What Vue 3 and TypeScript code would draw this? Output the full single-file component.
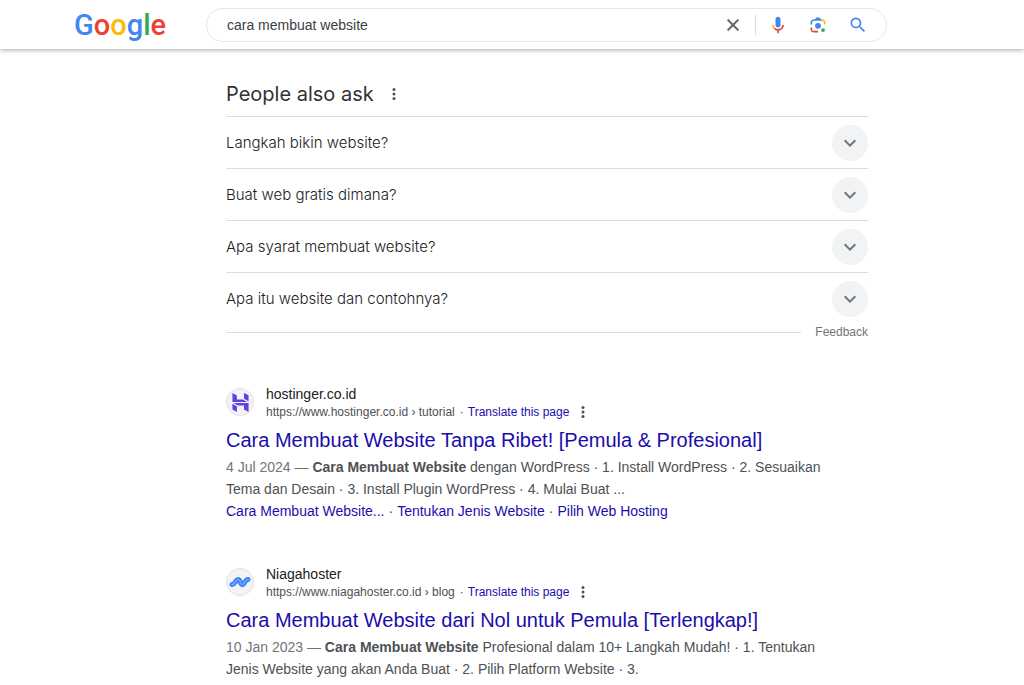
<script setup lang="ts">
import { ref } from 'vue'

interface SearchResult {
  id: string
  site: string
  url: string
  crumb: string
  title: string
  date: string
  summary: string
  links: string[]
}

const query = ref('cara membuat website')
const opened = ref<number | null>(null)

const logo = [
  { char: 'G', tone: 'blue' },
  { char: 'o', tone: 'red' },
  { char: 'o', tone: 'yellow' },
  { char: 'g', tone: 'blue' },
  { char: 'l', tone: 'green' },
  { char: 'e', tone: 'red' },
]

const questions = [
  'Langkah bikin website?',
  'Buat web gratis dimana?',
  'Apa syarat membuat website?',
  'Apa itu website dan contohnya?',
]

const results: SearchResult[] = [
  {
    id: 'hostinger',
    site: 'hostinger.co.id',
    url: 'https://www.hostinger.co.id',
    crumb: 'tutorial',
    title: 'Cara Membuat Website Tanpa Ribet! [Pemula & Profesional]',
    date: '4 Jul 2024',
    summary: 'dengan WordPress · 1. Install WordPress · 2. Sesuaikan Tema dan Desain · 3. Install Plugin WordPress · 4. Mulai Buat ...',
    links: ['Cara Membuat Website...', 'Tentukan Jenis Website', 'Pilih Web Hosting'],
  },
  {
    id: 'niagahoster',
    site: 'Niagahoster',
    url: 'https://www.niagahoster.co.id',
    crumb: 'blog',
    title: 'Cara Membuat Website dari Nol untuk Pemula [Terlengkap!]',
    date: '10 Jan 2023',
    summary: 'Profesional dalam 10+ Langkah Mudah! · 1. Tentukan Jenis Website yang akan Anda Buat · 2. Pilih Platform Website · 3.',
    links: [],
  },
]

function toggle(index: number) {
  opened.value = opened.value === index ? null : index
}
</script>

<template>
  <div class="page">
    <header class="topbar">
      <a class="logo" href="#" aria-label="Google">
        <span v-for="(part, i) in logo" :key="i" :class="part.tone">{{ part.char }}</span>
      </a>
      <form class="search" role="search" @submit.prevent>
        <input v-model="query" class="query" type="text" aria-label="Search" />
        <button class="tool clear" type="button" aria-label="Clear" @click="query = ''">
          <svg width="20" height="20" viewBox="0 0 24 24"><path fill="#5f6368" stroke="#5f6368" stroke-width="0.6" d="M19 6.410L17.590 5 12 10.590 6.410 5 5 6.410 10.590 12 5 17.590 6.410 19 12 13.410 17.590 19 19 17.590 13.410 12z" /></svg>
        </button>
        <button class="tool" type="button" aria-label="Search by voice">
          <svg width="20" height="20" viewBox="0 0 24 24">
            <path fill="#4285f4" d="M12 15c1.660 0 3-1.310 3-2.970V5c0-1.660-1.340-3-3-3S9 3.340 9 5v7.030C9 13.690 10.340 15 12 15z" />
            <path fill="#34a853" d="M11 18.080h2V22h-2z" />
            <path fill="#fbbc04" d="M7.050 16.870A6.900 6.900 0 0 1 5 12h2c0 1.450.560 2.420 1.470 3.380z" />
            <path fill="#ea4335" d="M12 16.930a4.970 4.970 0 0 1-3.540-1.550l-1.410 1.490A6.950 6.950 0 0 0 12 19c3.870 0 7-3.130 7-7h-2c0 2.760-2.240 4.930-5 4.930z" />
          </svg>
        </button>
        <button class="tool" type="button" aria-label="Search by image">
          <svg width="20" height="20" viewBox="0 0 192 192">
            <circle fill="#34a853" cx="144" cy="144" r="18" />
            <circle fill="#4285f4" cx="96" cy="104" r="28" />
            <path fill="#ea4335" d="M24 135.200c0 18.110 14.690 32.800 32.800 32.800H96v-16H56.100c-8.800 0-16.100-7.300-16.100-16.100V120H24z" />
            <path fill="#fbbc04" d="M168 72.800c0-18.110-14.690-32.800-32.800-32.800H116l20 16c8.800 0 16 7.290 16 16.100V92h16z" />
            <path fill="#4285f4" d="M112 24H80L68 40H56.800C38.690 40 24 54.690 24 72.800V92h16V72c0-8.800 7.200-16 16-16h80l-12-16z" />
          </svg>
        </button>
        <button class="tool" type="submit" aria-label="Search">
          <svg width="20" height="20" viewBox="0 0 24 24"><path fill="#4285f4" d="M15.500 14h-.790l-.280-.270A6.470 6.470 0 0 0 16 9.500 6.500 6.500 0 1 0 9.500 16c1.610 0 3.090-.590 4.230-1.570l.270.280v.790l5 4.990L20.490 19zm-6 0C7.010 14 5 11.990 5 9.500S7.010 5 9.500 5 14 7.010 14 9.500 11.990 14 9.500 14z" /></svg>
        </button>
      </form>
    </header>

    <main class="content">
      <section class="ask" aria-labelledby="ask-title">
        <div class="ask-head">
          <h2 id="ask-title">People also ask</h2>
          <button class="more" type="button" aria-label="About this section">
            <svg width="4" height="12" viewBox="0 0 4 12" fill="#4d5156"><circle cx="2" cy="1.500" r="1.500" /><circle cx="2" cy="6" r="1.500" /><circle cx="2" cy="10.500" r="1.500" /></svg>
          </button>
        </div>
        <button
          v-for="(question, i) in questions"
          :key="question"
          class="question"
          type="button"
          :aria-expanded="opened === i"
          @click="toggle(i)"
        >
          <span>{{ question }}</span>
          <span class="chevron">
            <svg width="24" height="24" viewBox="0 0 24 24"><path fill="#70757a" d="M16.590 8.590L12 13.170 7.410 8.590 6 10l6 6 6-6z" /></svg>
          </span>
        </button>
        <div class="feedback"><a href="#">Feedback</a></div>
      </section>

      <article v-for="result in results" :key="result.id" class="result">
        <div class="source">
          <span class="favicon">
            <svg v-if="result.id === 'hostinger'" width="19" height="19" viewBox="0 0 24 24" fill="#673de6">
              <path d="M16.415 0v7.160l5.785 3.384V2.949zM1.800 0v11.237h18.815L14.890 8.090l-7.457-.003V3.024zM16.415 20.894v-5.019l-7.514-.005-5.820-3.197 19.119.091V24zM1.800 13.551v7.343l5.633 2.949v-6.988z" />
            </svg>
            <svg v-else width="22" height="14" viewBox="0 0 22 14" fill="none" stroke-linecap="round" stroke-linejoin="round">
              <path stroke="#3f83f8" stroke-width="5" d="M3 9.500C5 10 6 7 7.500 5.500S10 4 11 6.500s2 4 3.500 2.500S17 4 19 4.500" />
              <path stroke="#a9c8ff" stroke-width="1" d="M3 9.500C5 10 6 7 7.500 5.500S10 4 11 6.500s2 4 3.500 2.500S17 4 19 4.500" />
            </svg>
          </span>
          <div class="source-text">
            <div class="site">{{ result.site }}</div>
            <div class="address">
              <cite>{{ result.url }} › {{ result.crumb }}</cite>
              <span class="dot">·</span>
              <a href="#">Translate this page</a>
              <button class="more" type="button" aria-label="About this result">
                <svg width="4" height="12" viewBox="0 0 4 12" fill="#4d5156"><circle cx="2" cy="1.500" r="1.500" /><circle cx="2" cy="6" r="1.500" /><circle cx="2" cy="10.500" r="1.500" /></svg>
              </button>
            </div>
          </div>
        </div>
        <h3><a href="#">{{ result.title }}</a></h3>
        <p class="snippet"><span class="date">{{ result.date }} — </span><b>Cara Membuat Website</b> {{ result.summary }}</p>
        <div v-if="result.links.length" class="sitelinks">
          <template v-for="(link, i) in result.links" :key="link">
            <span v-if="i > 0">·</span>
            <a href="#">{{ link }}</a>
          </template>
        </div>
      </article>
    </main>
  </div>
</template>

<style>
body {
  margin: 0;
  background: #fff;
}
</style>

<style scoped>
.page {
  height: 100vh;
  overflow: hidden;
  font-family: "Liberation Sans", Arial, sans-serif;
  font-size: 14px;
  color: #4d5156;
}
a {
  color: #1a0dab;
  text-decoration: none;
}
button {
  padding: 0;
  border: 0;
  background: none;
  font: inherit;
  color: inherit;
  cursor: pointer;
}
svg {
  display: block;
}
.topbar {
  display: flex;
  align-items: center;
  height: 49px;
  padding-left: 74px;
  box-shadow: 0 1px 5px rgba(32, 33, 36, 0.4);
}
.logo {
  width: 132px;
  font-family: Roboto, sans-serif;
  font-size: 29px;
  font-weight: 500;
  line-height: 40px;
}
.blue { color: #4285f4; }
.red { color: #ea4335; }
.yellow { color: #fbbc05; }
.green { color: #34a853; }
.search {
  display: flex;
  align-items: center;
  box-sizing: border-box;
  flex: 0 1 681px;
  height: 34px;
  padding: 0 18px 0 20px;
  border: 1px solid #e4e8ea;
  border-radius: 17px;
}
.query {
  flex: 1;
  min-width: 0;
  padding: 0;
  border: 0;
  outline: 0;
  background: none;
  font: inherit;
  color: #3c4043;
}
.tool {
  display: flex;
  margin-left: 20px;
}
.clear {
  padding-right: 12px;
  margin-right: -8px;
  border-right: 1px solid #dadce0;
}
.content {
  width: 642px;
  max-width: calc(100% - 226px);
  margin-left: 226px;
}
.ask {
  padding-top: 26px;
  margin-bottom: 44px;
}
.ask-head {
  display: flex;
  align-items: center;
  gap: 18px;
  height: 38px;
  padding-bottom: 3px;
}
h2 {
  margin: 0;
  font-family: Inter, sans-serif;
  font-size: 20px;
  font-weight: 400;
  line-height: 28px;
  color: #303134;
}
.question {
  display: flex;
  align-items: center;
  justify-content: space-between;
  width: 100%;
  height: 52px;
  border-top: 1px solid #dadce0;
  font-family: Inter, sans-serif;
  font-size: 15px;
  font-weight: 300;
  color: #202124;
}
.chevron {
  display: flex;
  align-items: center;
  justify-content: center;
  width: 36px;
  height: 36px;
  border-radius: 50%;
  background: #f1f3f4;
}
.feedback {
  display: flex;
  align-items: center;
  gap: 14px;
  height: 16px;
  font-size: 12px;
}
.feedback::before {
  content: "";
  flex: 1;
  height: 1px;
  background: #dadce0;
}
.feedback a {
  color: #70757a;
}
.result {
  max-width: 604px;
  margin-bottom: 42px;
}
.source {
  display: flex;
  align-items: center;
  gap: 12px;
}
.favicon {
  display: flex;
  align-items: center;
  justify-content: center;
  box-sizing: border-box;
  width: 28px;
  height: 28px;
  border: 1px solid #dfe1e5;
  border-radius: 50%;
  background: #f1f3f4;
}
.site {
  line-height: 20px;
  color: #202124;
}
.address {
  display: flex;
  align-items: center;
  font-size: 12px;
  line-height: 16px;
}
cite {
  font-style: normal;
}
.dot {
  margin: 0 4px 0 5px;
}
.address .more {
  margin-left: 12px;
}
h3 {
  margin: 6px 0 2px;
  font-size: 20px;
  font-weight: 400;
  line-height: 28px;
  white-space: nowrap;
}
.snippet {
  margin: 0;
  line-height: 22px;
}
.date {
  color: #70757a;
}
.sitelinks {
  display: flex;
  gap: 4px;
  line-height: 22px;
}
</style>
